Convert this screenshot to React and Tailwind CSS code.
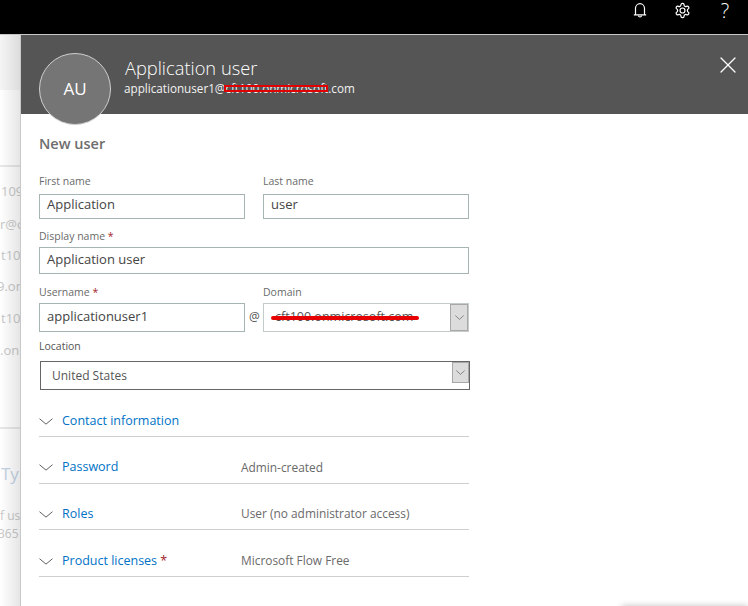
import { X } from 'lucide-react';

const FONT = "font-['Open_Sans','Noto_Sans',sans-serif]";

const SECTIONS = [
  { title: 'Contact information', value: '', height: 'h-[47px] pt-[17px]' },
  { title: 'Password', value: 'Admin-created', height: 'h-[47px] pt-[15px]' },
  { title: 'Roles', value: 'User (no administrator access)', height: 'h-[46px] pt-[15px]' },
  { title: 'Product licenses', value: 'Microsoft Flow Free', required: true, height: 'h-[47px] pt-[16px]' },
];

function Chevron({ className }) {
  return (
    <svg viewBox="0 0 14 8" preserveAspectRatio="none" className={className} fill="none" stroke="currentColor" strokeWidth="1">
      <path d="M0.5 0.8 L7 7 L13.5 0.8" />
    </svg>
  );
}

function Label({ children, required, className = '' }) {
  return (
    <p className={`text-[10.5px] leading-[14px] text-[#6a6a6a] ${className}`}>
      {children}
      {required && <span className="text-[#a4262c]"> *</span>}
    </p>
  );
}

function Field({ value, height }) {
  return (
    <div className={`flex items-center border border-[#a6b5b3] pl-[7px] text-[13px] text-[#444] ${height}`}>
      {value}
    </div>
  );
}

function Backdrop() {
  return (
    <div className="relative w-[21px] shrink-0 overflow-hidden border-r border-[#c8c8c8] text-[13px] text-[#c8c8c8]">
      <div className="h-[55px] bg-[#f5f5f5]" />
      <div className="mt-[75px] h-[2px] bg-[#e8e8e8]" />
      <div className="flex flex-col items-start whitespace-nowrap">
        <span className="mt-[14px] ml-[1px] h-[33px] leading-[20px]">109</span>
        <span className="h-[31px] leading-[20px]">r@c</span>
        <span className="ml-[1px] h-[31px] leading-[20px]">t10</span>
        <span className="-ml-[3px] h-[32px] leading-[20px]">9.on</span>
        <span className="ml-[1px] h-[32px] leading-[20px]">t109</span>
        <span className="h-[20px] leading-[20px]">.onr</span>
      </div>
      <div className="mt-[67px] h-[2px] bg-[#e8e8e8]" />
      <p className="mt-[33px] whitespace-nowrap pl-[1px] text-[17px] leading-[24px] text-[#c5d3e6]">Typ</p>
      <p className="mt-[21px] whitespace-nowrap text-[12px] leading-[18px]">f us</p>
      <p className="-ml-[2px] whitespace-nowrap text-[12px] leading-[18px]">365</p>
      <div className="pointer-events-none absolute inset-y-0 right-0 w-[20px] bg-gradient-to-r from-transparent to-black/10" />
    </div>
  );
}

export default function App() {
  return (
    <div className={`relative flex h-[606px] w-[748px] flex-col overflow-hidden bg-white ${FONT}`}>
      <header className="flex h-[34px] shrink-0 items-start justify-end bg-black text-white">
        <div className="flex h-[20px] w-[43px] items-center justify-center">
          <svg viewBox="0 0 14 16" className="h-[16px] w-[14px]" fill="none" stroke="currentColor" strokeWidth="1.2">
            <path d="M2.5 12.5 V6.5 A4.5 4.8 0 0 1 11.5 6.5 V12.5 M0.8 12.8 H13.2" />
            <path d="M5.5 13.5 A1.5 1.5 0 0 0 8.5 13.5" />
          </svg>
        </div>
        <div className="flex h-[20px] w-[43px] items-center justify-center">
          <svg viewBox="0 0 24 24" className="h-[17px] w-[17px]" fill="none" stroke="currentColor" strokeWidth="1.7">
            <path d="M12.22 2h-.44a2 2 0 0 0-2 2v.18a2 2 0 0 1-1 1.73l-.43.25a2 2 0 0 1-2 0l-.15-.08a2 2 0 0 0-2.73.73l-.22.38a2 2 0 0 0 .73 2.73l.15.1a2 2 0 0 1 1 1.72v.51a2 2 0 0 1-1 1.74l-.15.09a2 2 0 0 0-.73 2.73l.22.38a2 2 0 0 0 2.73.73l.15-.08a2 2 0 0 1 2 0l.43.25a2 2 0 0 1 1 1.73V20a2 2 0 0 0 2 2h.44a2 2 0 0 0 2-2v-.18a2 2 0 0 1 1-1.73l.43-.25a2 2 0 0 1 2 0l.15.08a2 2 0 0 0 2.73-.73l.22-.39a2 2 0 0 0-.73-2.73l-.15-.08a2 2 0 0 1-1-1.74v-.5a2 2 0 0 1 1-1.74l.15-.09a2 2 0 0 0 .73-2.73l-.22-.38a2 2 0 0 0-2.73-.73l-.15.08a2 2 0 0 1-2 0l-.43-.25a2 2 0 0 1-1-1.73V4a2 2 0 0 0-2-2z" />
            <circle cx="12" cy="12" r="3.5" />
          </svg>
        </div>
        <div className="flex h-[22px] w-[44px] items-center justify-center pr-[2px] text-[20px] font-light leading-[22px]">?</div>
      </header>

      <div className="h-px shrink-0 bg-[#c8c8c8]" />

      <div className="flex min-h-0 flex-1">
        <Backdrop />

        <main className="relative min-w-0 flex-1">
          <div className="relative flex h-[79px] bg-[#555555] pl-[104px] pt-[20px] text-white">
            <div>
              <h1 className="text-[18.3px] font-light leading-[25px]">Application user</h1>
              <p className="relative -ml-px w-fit text-[11.7px] leading-[16px] text-[#f2f2f2]">
                applicationuser1@cft100.onmicrosoft.com
                <span className="absolute left-[100px] top-[5px] h-[7px] w-[104px] border-2 border-[#e00000]" />
              </p>
            </div>
            <X className="absolute right-[6px] top-[16px] h-[28px] w-[28px]" strokeWidth={1.1} />
          </div>

          {/* Avatar hangs over the bottom edge of the header */}
          <div className="absolute left-[18px] top-[18px] flex h-[72px] w-[72px] items-center justify-center rounded-full border border-[#d0d0d0] bg-[#757575] text-[17px] text-white">
            AU
          </div>

          <div className="w-[448px] pl-[18px]">
            <h2 className="pt-[20px] text-[14.5px] font-semibold leading-[20px] text-[#6e6e6e]">New user</h2>

            <div className="mt-[20px] grid grid-cols-2 gap-x-[18px]">
              <div>
                <Label>First name</Label>
                <Field value="Application" height="mt-[6px] h-[25px] pb-[4px]" />
              </div>
              <div>
                <Label>Last name</Label>
                <Field value="user" height="mt-[6px] h-[25px] pb-[4px]" />
              </div>
            </div>

            <Label required className="mt-[10px]">Display name</Label>
            <Field value="Application user" height="mt-[4px] h-[27px] pb-[2px]" />

            <div className="mt-[11px] flex">
              <div className="w-[206px] shrink-0">
                <Label required>Username</Label>
                <Field value="applicationuser1" height="mt-[4px] h-[29px] pb-[2px]" />
              </div>
              <div className="flex w-[18px] shrink-0 items-end justify-center pb-[8px] pl-px text-[12px] leading-[14px] text-[#555]">@</div>
              <div className="w-[206px] shrink-0">
                <Label>Domain</Label>
                <div className="relative mt-[4px] flex h-[29px] items-center border border-[#c4cccb] pl-[11px] text-[12.5px] text-[#555]">
                  cft100.onmicrosoft.com
                  <span className="absolute left-[7px] top-[12px] h-[4px] w-[148px] rounded-full bg-[#e60000]" />
                  <span className="absolute inset-y-0 right-0 flex w-[18px] items-center justify-center border border-[#a8a8a8] bg-[#dcdcdc] text-[#555]">
                    <Chevron className="h-[5px] w-[9px]" />
                  </span>
                </div>
              </div>
            </div>

            <Label className="mt-[7px] text-[#555]">Location</Label>
            <div className="relative mt-[8px] ml-px flex h-[29px] w-[430px] items-center border border-[#666] pl-[11px] text-[12px] text-[#555]">
              United States
              <span className="absolute right-0 top-0 flex h-[21px] w-[17px] items-center justify-center border border-[#a8a8a8] bg-[#dcdcdc] text-[#555]">
                <Chevron className="h-[5px] w-[9px]" />
              </span>
            </div>

            <div>
              {SECTIONS.map((s) => (
                <div key={s.title} className={`flex items-center border-b border-[#cfcfcf] ${s.height}`}>
                  <Chevron className="h-[7px] w-[14px] shrink-0 text-[#555]" />
                  <div className="ml-[9px] w-[179px] shrink-0 text-[12.5px] text-[#0072c6]">
                    {s.title}
                    {s.required && <span className="text-[#a4262c]"> *</span>}
                  </div>
                  <div className="text-[11.9px] text-[#6a6a6a]">{s.value}</div>
                </div>
              ))}
            </div>
          </div>
        </main>
      </div>

      {/* Edge of something peeking in at the bottom right */}
      <div className="absolute bottom-[-8px] right-0 h-[8px] w-[126px] shadow-[0_0_6px_rgba(0,0,0,0.25)]" />
    </div>
  );
}
